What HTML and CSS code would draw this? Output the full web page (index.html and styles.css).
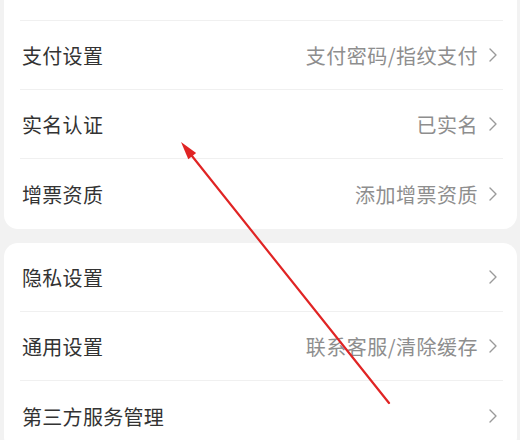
FILE: index.html
```html
<!DOCTYPE html>
<html lang="zh-CN">
<head>
<meta charset="utf-8">
<title>设置</title>
<link rel="stylesheet" href="styles.css">
</head>
<body>
<div class="page">
  <section class="card card-top">
    <div class="row row-partial"></div>
    <div class="row"><span class="label">支付设置</span><span class="value">支付密码/指纹支付</span><svg class="chev" viewBox="0 0 10 16"><polyline points="2,2 8,8 2,14"/></svg></div>
    <div class="row"><span class="label">实名认证</span><span class="value">已实名</span><svg class="chev" viewBox="0 0 10 16"><polyline points="2,2 8,8 2,14"/></svg></div>
    <div class="row row-last"><span class="label">增票资质</span><span class="value">添加增票资质</span><svg class="chev" viewBox="0 0 10 16"><polyline points="2,2 8,8 2,14"/></svg></div>
  </section>
  <section class="card">
    <div class="row"><span class="label">隐私设置</span><span class="value"></span><svg class="chev" viewBox="0 0 10 16"><polyline points="2,2 8,8 2,14"/></svg></div>
    <div class="row"><span class="label">通用设置</span><span class="value">联系客服/清除缓存</span><svg class="chev" viewBox="0 0 10 16"><polyline points="2,2 8,8 2,14"/></svg></div>
    <div class="row row-last"><span class="label">第三方服务管理</span><span class="value"></span><svg class="chev" viewBox="0 0 10 16"><polyline points="2,2 8,8 2,14"/></svg></div>
  </section>
  <svg class="annot" viewBox="0 0 520 440" width="520" height="440">
    <line x1="389" y1="403" x2="190" y2="153.5" class="annot-line"/>
    <polygon points="181,142 196.1,153 188.3,159.2" class="annot-head"/>
  </svg>
</div>
</body>
</html>
```
FILE: styles.css
```css
html, body {
  margin: 0;
  padding: 0;
  background: #f2f2f2;
}
body {
  font-family: "Noto Sans CJK SC", "Noto Sans", sans-serif;
  width: 520px;
  height: 440px;
  overflow: hidden;
}
.page {
  position: relative;
  width: 520px;
  height: 440px;
  display: flex;
  flex-direction: column;
  gap: 14px;
}
.card {
  background: #fff;
  margin: 0 3px 0 4px;
  border-radius: 14px;
  padding: 0 14px 0 16px;
  display: flex;
  flex-direction: column;
  flex-shrink: 0;
}
.card-top {
  border-top-left-radius: 0;
  border-top-right-radius: 0;
}
.row {
  height: 69px;
  display: flex;
  align-items: center;
  border-bottom: 1px solid #f0f0f0;
  padding: 0 5px 0 2px;
  flex-shrink: 0;
  box-sizing: border-box;
}
.row-partial {
  height: 21px;
}
.row-last {
  border-bottom: none;
  height: 70px;
}
.label {
  font-size: 20px;
  color: #333;
  letter-spacing: 0.3px;
}
.value {
  margin-left: auto;
  font-size: 20px;
  color: #8e8e8e;
  letter-spacing: 0.5px;
}
.chev {
  width: 10px;
  height: 16px;
  margin-left: 10px;
  flex-shrink: 0;
}
.chev polyline {
  fill: none;
  stroke: #9a9a9a;
  stroke-width: 1.4;
  stroke-linecap: round;
  stroke-linejoin: round;
}
.annot {
  position: absolute;
  left: 0;
  top: 0;
  pointer-events: none;
}
.annot-line {
  stroke: #e02424;
  stroke-width: 2.2;
  stroke-linecap: round;
}
.annot-head {
  fill: #e02424;
}
```
